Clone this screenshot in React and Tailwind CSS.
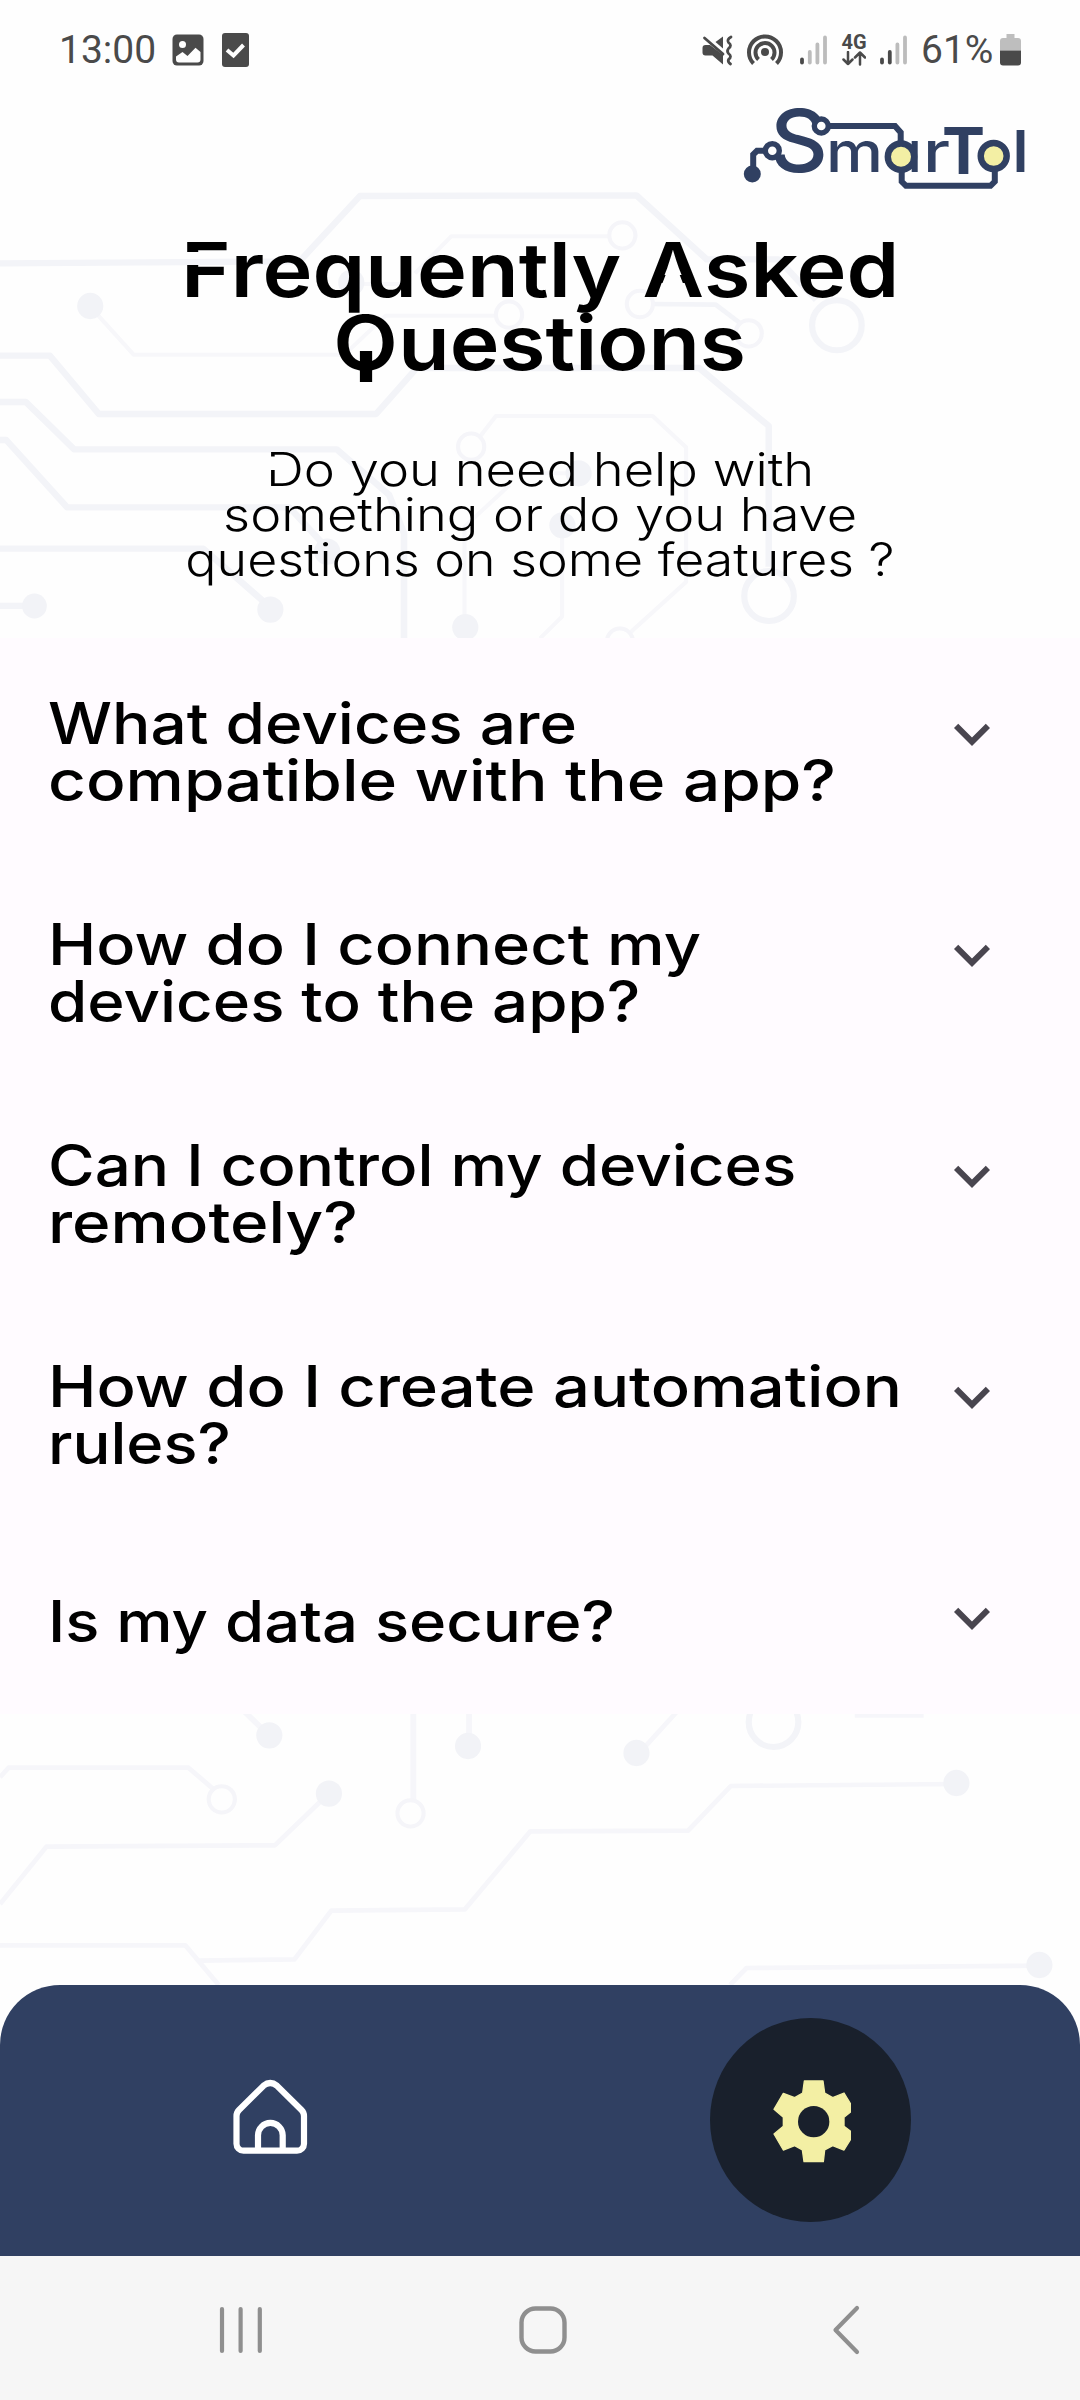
const NAVY = "#304062";
const CREAM = "#f3efa4";

function Node({ x, y, r = 38 }) {
  return <ellipse cx={x} cy={y} rx={r} ry={r * 1.04} fill="#f2f3f7" stroke="none" />;
}

function Ring({ x, y, r = 38, w = 4, c = "#f5f5f9" }) {
  return <ellipse cx={x} cy={y} rx={r} ry={r * 1.04} fill="#fefefe" stroke={c} strokeWidth={w * 3} />;
}

/* Faint circuit-board drawing behind the whole screen */
function Circuit() {
  return (
    <svg className="absolute inset-0 h-full w-full" viewBox="0 0 1080 2400" fill="none" strokeLinejoin="round">
      <g transform="translate(0 170) scale(.3444 .3333)">
        <g stroke="#f3f4f8" strokeWidth="19">
          <path d="M0 280L870 274L1045 78L1848 76L2052 268H2260L2370 390" />
          <path d="M0 557H145L287 732H1092L1210 594H2030L2232 768V1190" />
          <path d="M0 696H75L215 838H978L1130 975L1173 1090V1410" />
          <path d="M0 810H18L195 1012H840L950 1135" />
          <path d="M0 1136H590L780 1308M0 1308H90" />
          <path d="M1890 402L2078 404L2160 468" strokeWidth="14" />
        </g>
        <g stroke="#f7f7fa" strokeWidth="12">
          <path d="M275 425L388 554H1000L1120 437H1445" />
          <path d="M1205 310L1310 199H1775M1040 342H1180" />
          <path d="M1390 805L1440 738H1895L1992 832V1236L1822 1395" />
          <path d="M1480 945L1349 1070V1350M1632 1090V1340L1568 1405M1568 910H1690" />
        </g>
        <Node x={262} y={408} />
        <Node x={1020} y={338} />
        <Node x={950} y={1145} />
        <Node x={785} y={1319} />
        <Node x={100} y={1308} r={36} />
        <Node x={1351} y={1372} />
        <Node x={1680} y={910} />
        <Node x={1633} y={1066} />
        <Ring x={1478} y={434} />
        <Ring x={1807} y={196} />
        <Ring x={1858} y={402} />
        <Ring x={2174} y={490} />
        <Ring x={1368} y={830} />
        <Ring x={1800} y={1415} />
        <Ring x={2430} y={466} r={72} w={6} c="#f3f4f8" />
        <Ring x={2233} y={1278} r={72} w={6} c="#f3f4f8" />
      </g>
      <g transform="translate(0 1700) scale(.3444 .3333)">
        <g stroke="#f6f6fa" strokeWidth="14">
          <path d="M0 232L25 203H547L625 272M0 612L135 440L798 436L935 300" />
          <path d="M700 25L770 95M1200 0V300M1362 0V115" strokeWidth="17" />
          <path d="M0 736H538L635 855M575 782L855 778L962 632L1350 628L1540 394L1998 392L2122 258L2778 252" />
          <path d="M2120 855L2168 804L3015 797M1860 155L1970 30" />
          <path d="M2482 46H2682" strokeWidth="15" />
        </g>
        <Node x={782} y={106} />
        <Node x={955} y={281} />
        <Node x={1359} y={138} />
        <Node x={1848} y={159} />
        <Node x={2777} y={249} />
        <Node x={3018} y={795} />
        <Ring x={644} y={298} />
        <Ring x={1192} y={340} />
        <Ring x={2246} y={66} r={72} w={6} c="#f3f4f8" />
      </g>
    </svg>
  );
}

function Signal({ strong }) {
  const on = "#4a4a4a";
  const off = "#bcbcbc";
  return (
    <svg width="27" height="30" viewBox="0 0 27 30" strokeWidth="3.8" strokeLinecap="round">
      <path d="M2 24.5V27.6" stroke={on} />
      <path d="M9.8 17V27.6" stroke={strong ? on : off} />
      <path d="M17.4 9.500V27.6M25 2.500V27.6" stroke={off} />
    </svg>
  );
}

function StatusBar() {
  return (
    <div className="relative flex h-[100px] items-center pl-[59px] font-['Roboto',sans-serif] text-[39px] leading-none text-[#4a4a4a]">
      <span className="w-[113px]">13:00</span>
      <svg width="32" height="32" viewBox="0 0 32 32">
        <rect x=".5" y=".5" width="31" height="31" rx="4.5" fill="#4a4a4a" />
        <circle cx="10.500" cy="10.500" r="3.500" fill="#fefefe" />
        <path d="M4 22.500L10.500 18L15.500 22L23.500 13.800L28.500 18V25.500Q28.500 28.500 25.500 28.500H7Q4 28.500 4 25.500Z" fill="#fefefe" />
      </svg>
      <svg className="ml-[18px]" width="27" height="34" viewBox="0 0 27 34">
        <rect width="27" height="34" rx="3" fill="#4a4a4a" />
        <path d="M5 17L11.500 22.500L21.500 12" fill="none" stroke="#fefefe" strokeWidth="4" />
      </svg>
      <svg className="ml-[453px]" width="31" height="31" viewBox="0 0 31 31">
        <path d="M3.500 10H8L21 20V29.500L10.500 20.500H3.500Q.5 20.500 .5 17.500V13Q.5 10 3.500 10Z" fill="#4a4a4a" />
        <path d="M13.500 7L21 1.500V13.500Z" fill="#4a4a4a" />
        <path d="M2.500 3L21 19M29 2Q24.500 4.500 26.500 7.500Q30.500 10.500 26.500 13.500Q24.500 16 26.500 18.500Q30.500 21.500 26.500 24.500Q25.500 27 28.500 29" fill="none" stroke="#4a4a4a" strokeWidth="2.800" strokeLinecap="round" />
      </svg>
      <svg className="ml-[14px]" width="36" height="36" viewBox="0 0 36 36" fill="none" stroke="#4a4a4a" strokeWidth="4">
        <circle cx="18" cy="20" r="4" fill="#4a4a4a" stroke="none" />
        <path d="M6.500 31.500A16 16 0 1 1 29.500 31.500M11.500 27.500A9.500 9.500 0 1 1 24.500 27.500" />
      </svg>
      <div className="ml-[17px]"><Signal /></div>
      <div className="ml-[14px] flex w-[26px] flex-col items-center">
        <span className="text-[20px] leading-[17px] font-bold">4G</span>
        <svg width="24" height="15" viewBox="0 0 24 15" fill="none" stroke="#4a4a4a" strokeWidth="2.500" strokeLinecap="round" strokeLinejoin="round">
          <path d="M6 1V13M1.500 8.500L6 13L10.500 8.500M18 13.500V1.500M13 6.500L18 1.500L23 6.500" />
        </svg>
      </div>
      <div className="ml-[13px]"><Signal strong /></div>
      <span className="ml-[14px] w-[79px] whitespace-nowrap">61%</span>
      <svg width="21" height="32" viewBox="0 0 21 32">
        <path d="M6.500 0H14.500V4H18Q21 4 21 7V16.500H0V7Q0 4 3 4H6.500Z" fill="#bebebe" />
        <path d="M0 16.500H21V28.500Q21 31.500 18 31.500H3Q0 31.500 0 28.500Z" fill="#4a4a4a" />
      </svg>
    </div>
  );
}

function Logo() {
  return (
    <svg className="mr-[50px]" width="290" height="90" viewBox="740 100 290 90" fontFamily="Inter, sans-serif" fill={NAVY}>
      <text x="770" y="171.500" fontSize="87" fontWeight="500" textLength="58" lengthAdjust="spacingAndGlyphs">S</text>
      <g fontSize="56" fontWeight="500">
        <text x="826" y="171.800" textLength="57" lengthAdjust="spacingAndGlyphs">m</text>
        <text x="923" y="171.800" textLength="27" lengthAdjust="spacingAndGlyphs">r</text>
      </g>
      <text x="942" y="173.500" fontSize="64" fontWeight="700" textLength="43" lengthAdjust="spacingAndGlyphs">T</text>
      <text x="1012.500" y="171.800" fontSize="58" fontWeight="600" textLength="16" lengthAdjust="spacingAndGlyphs">l</text>
      <g fill="none" stroke={NAVY} strokeWidth="6">
        <path d="M821 126H895L900.700 132.500V145M772 150.800H757L753.200 154.500V174" />
        <path d="M901.700 170V181.500L906 185.800H990.500L994.800 181.500V170" />
        <path d="M914.700 141V172" />
      </g>
      <circle cx="752.300" cy="174" r="8.500" />
      <circle cx="821.300" cy="126" r="7" fill="#fefefe" stroke={NAVY} strokeWidth="5.400" />
      <circle cx="772.300" cy="150.700" r="7" fill="#fefefe" stroke={NAVY} strokeWidth="5.400" />
      <circle cx="901" cy="156.700" r="13.200" fill={CREAM} stroke={NAVY} strokeWidth="6.400" />
      <circle cx="993.700" cy="156" r="13" fill={CREAM} stroke={NAVY} strokeWidth="6.400" />
    </svg>
  );
}

function Heading() {
  return (
    <h1 className="mt-[43px] flex flex-col items-center text-[75.6px] leading-[73px] font-semibold whitespace-nowrap">
      <span className="block scale-x-[1.118]">
        <span className="inline-block [clip-path:polygon(0_0,100%_0,100%_19px,0_19px,0_32px,100%_32px,100%_100%,0_100%)]">F</span>
        requently{" "}
        <span className="inline-block [clip-path:polygon(0_0,100%_0,100%_100%,41px_100%,41px_64px,27px_24px,13px_64px,13px_100%,0_100%)]">A</span>
        sked
      </span>
      <span className="block scale-x-[1.112]">
        <span className="relative inline-block text-transparent before:absolute before:left-0 before:text-black before:content-['O'] after:absolute after:top-[45px] after:left-[24px] after:h-[31px] after:w-[11px] after:bg-black">Q</span>
        uestions
      </span>
    </h1>
  );
}

const faqs = [
  [["What devices are", "scale-x-[1.120]"], ["compatible with the app?", "scale-x-[1.152]"]],
  [["How do I connect my", "scale-x-[1.139]"], ["devices to the app?", "scale-x-[1.116]"]],
  [["Can I control my devices", "scale-x-[1.117]"], ["remotely?", "scale-x-[1.150]"]],
  [["How do I create automation", "scale-x-[1.143]"], ["rules?", "scale-x-[1.108]"]],
  [["Is my data secure?", "scale-x-[1.112]"]],
];

function FaqItem({ lines }) {
  return (
    <div className="flex h-[192px] items-start pl-[48px]">
      <div className={lines.length > 1 ? "w-[888px] pt-[57px]" : "w-[888px] pt-[71px]"}>
        {lines.map(([text, fit]) => (
          <div key={text} className={`w-max origin-left text-[57px] leading-[57px] font-medium whitespace-nowrap ${fit}`}>{text}</div>
        ))}
      </div>
      <svg className="mt-[60px]" width="72" height="72" viewBox="0 0 24 24" fill="#49454f">
        <path d="M16.590 8.590L12 13.170L7.410 8.590L6 10L12 16L18 10Z" />
      </svg>
    </div>
  );
}

function TabBar() {
  return (
    <nav className="relative grid h-[271px] grid-cols-2 items-center rounded-t-[60px] bg-[#304062]">
      <div className="flex justify-center pb-[7px]">
        <svg width="80" height="80" viewBox="0 0 80 80" fill="none" stroke="#fff" strokeWidth="6.200">
          <path d="M6.500 39Q6.500 35.500 9 33L33.500 8.700Q40.200 3.300 47 8.700L71.500 33Q74 35.500 74 39V66.500A7 7 0 0 1 67 73.700H13.500A7 7 0 0 1 6.500 66.500Z" />
          <path d="M28 73.700V58.300A12.300 12.300 0 0 1 52.700 58.300V73.700" />
        </svg>
      </div>
      <div className="flex justify-center pb-[2px]">
        <div className="flex h-[204px] w-[201px] items-center justify-center rounded-[50%] bg-[#19202c]">
          <svg className="mt-[4px] ml-[4px]" width="78.700" height="82.700" viewBox="248 269 236 248">
            <path
              fill={CREAM}
              stroke={CREAM}
              strokeWidth="4"
              strokeLinejoin="round"
              d="M342 272H398L403 308L427 322L461 308L481 341V365L461 381V408L481 423V447L461 479L427 466L403 479L399 514H341L336 479L313 466L279 479L251 431L279 408V381L251 357L279 309L313 322L337 308Z"
            />
            <circle cx="370" cy="394" r="47" fill="#19202c" />
          </svg>
        </div>
      </div>
    </nav>
  );
}

function SystemBar() {
  return (
    <div className="relative flex h-[144px] items-center bg-[#f6f6f6] pl-[219px]">
      <svg className="mb-[-4px]" width="44" height="48" viewBox="0 0 44 48" stroke="#8f8f8f" strokeWidth="4.200" strokeLinecap="round">
        <path d="M3 3V45M21.600 3V45M40.800 3V45" />
      </svg>
      <svg className="mb-[-4px] ml-[256px]" width="48" height="48" viewBox="0 0 48 48" fill="none" stroke="#8f8f8f" strokeWidth="4.400">
        <rect x="2.500" y="2.500" width="43" height="43" rx="14" />
      </svg>
      <svg className="mb-[-4px] ml-[264px]" width="30" height="50" viewBox="0 0 30 50" fill="none" stroke="#8f8f8f" strokeWidth="4.200" strokeLinecap="round" strokeLinejoin="round">
        <path d="M26 3L4.500 25L26 47" />
      </svg>
    </div>
  );
}

export default function App() {
  return (
    <div className="relative flex h-[2400px] w-[1080px] flex-col overflow-hidden bg-[#fefefe] font-['Inter',sans-serif] text-black">
      <Circuit />
      <StatusBar />
      <header className="relative h-[538px]">
        <div className="flex h-[90px] justify-end">
          <Logo />
        </div>
        <Heading />
        <p className="mt-[68px] flex flex-col items-center text-[45.8px] leading-[45px] font-light whitespace-nowrap">
          <span className="block scale-x-[1.146]">
            <span className="inline-block [clip-path:polygon(0_0,100%_0,100%_100%,0_100%,0_23px,9px_23px,9px_9.500px,0_9.500px)]">D</span>
            o you need help with
          </span>
          <span className="block scale-x-[1.144]">something or do you have</span>
          <span className="block scale-x-[1.133]">questions on some features ?</span>
        </p>
      </header>
      <section className="relative flex h-[1076px] flex-col justify-between bg-[#fffbff]">
        {faqs.map((lines) => (
          <FaqItem key={lines[0][0]} lines={lines} />
        ))}
      </section>
      <div className="h-[271px]" />
      <TabBar />
      <SystemBar />
    </div>
  );
}
